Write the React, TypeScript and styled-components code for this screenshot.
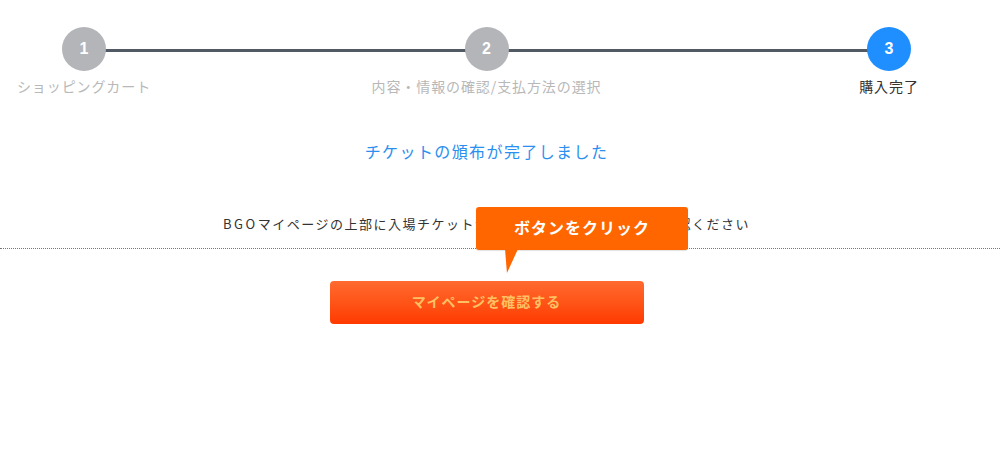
import React from "react";
import styled, { createGlobalStyle } from "styled-components";

const GlobalStyle = createGlobalStyle`
  html, body { margin: 0; padding: 0; background: #ffffff; }
  body {
    font-family: "Noto Sans CJK JP", "Noto Sans", sans-serif;
    color: #333333;
  }
`;

const Page = styled.div`
  width: 1000px;
  display: flex;
  flex-direction: column;
`;

const Stepper = styled.ol`
  position: relative;
  list-style: none;
  margin: 0;
  padding: 27px 0 0;
  width: 973px;
  display: flex;
  justify-content: space-between;
  &::before {
    content: "";
    position: absolute;
    left: 84px;
    right: 84px;
    top: 49px;
    height: 3px;
    background: #505964;
  }
`;

const Step = styled.li`
  position: relative;
  width: 168px;
  display: flex;
  flex-direction: column;
  align-items: center;
`;

const Circle = styled.span<{ $active?: boolean }>`
  width: 44px;
  height: 44px;
  border-radius: 50%;
  background: ${(p) => (p.$active ? "#1f8fff" : "#b3b5b9")};
  color: #ffffff;
  display: flex;
  align-items: center;
  justify-content: center;
  font-family: "Liberation Sans", Arial, sans-serif;
  font-weight: bold;
  font-size: 16px;
`;

const StepLabel = styled.span<{ $active?: boolean }>`
  margin-top: 5px;
  line-height: 20px;
  font-size: 14px;
  letter-spacing: 0.9px;
  white-space: nowrap;
  color: ${(p) => (p.$active ? "#333333" : "#b8b8b8")};
`;

const Title = styled.h2`
  width: 973px;
  margin: 43px 0 0;
  text-align: center;
  font-weight: normal;
  font-size: 16px;
  line-height: 24px;
  letter-spacing: 1.4px;
  color: #2b8ff0;
`;

const MessageBlock = styled.div`
  position: relative;
  margin-top: 51px;
  padding-bottom: 14px;
  border-bottom: 1px dotted #777777;
`;

const Message = styled.p`
  width: 973px;
  margin: 0;
  text-align: center;
  font-size: 13px;
  line-height: 20px;
  letter-spacing: 1.5px;
  color: #333333;
`;

const Latin = styled.span`
  letter-spacing: 2.5px;
`;

const Tooltip = styled.div`
  position: absolute;
  left: 476px;
  top: -7px;
  width: 212px;
  height: 43px;
  padding-bottom: 3px;
  box-sizing: border-box;
  border-radius: 3px;
  background: #ff6600;
  color: #ffffff;
  font-weight: bold;
  font-size: 16px;
  letter-spacing: 1px;
  display: flex;
  align-items: center;
  justify-content: center;
  box-shadow: 0 1px 1px rgba(0, 0, 0, 0.12);
  &::after {
    content: "";
    position: absolute;
    left: 29px;
    top: 42px;
    width: 13px;
    height: 24px;
    background: #ff6600;
    clip-path: polygon(0 0, 100% 0, 15% 100%);
  }
`;

const ButtonRow = styled.div`
  width: 973px;
  display: flex;
  justify-content: center;
  margin-top: 32px;
`;

const ConfirmButton = styled.button`
  width: 314px;
  height: 43px;
  padding: 0 0 3px;
  border: none;
  border-radius: 4px;
  background: linear-gradient(to bottom, #ff6a30 0%, #ff5418 50%, #ff3a00 100%);
  color: #ffc163;
  font-family: "Noto Sans CJK JP", "Noto Sans", sans-serif;
  font-weight: bold;
  font-size: 14px;
  letter-spacing: 1px;
  cursor: pointer;
`;

const steps = [
  { n: 1, label: "ショッピングカート" },
  { n: 2, label: "内容・情報の確認/支払方法の選択" },
  { n: 3, label: "購入完了" },
];

export default function App() {
  const current = 3;
  return (
    <Page>
      <GlobalStyle />
      <Stepper>
        {steps.map((s) => (
          <Step key={s.n}>
            <Circle $active={s.n === current}>{s.n}</Circle>
            <StepLabel $active={s.n === current}>{s.label}</StepLabel>
          </Step>
        ))}
      </Stepper>
      <Title>チケットの頒布が完了しました</Title>
      <MessageBlock>
        <Message>
          <Latin>BGO</Latin>マイページの上部に入場チケットが表示されているかどうかご確認ください
        </Message>
        <Tooltip>ボタンをクリック</Tooltip>
      </MessageBlock>
      <ButtonRow>
        <ConfirmButton>マイページを確認する</ConfirmButton>
      </ButtonRow>
    </Page>
  );
}
